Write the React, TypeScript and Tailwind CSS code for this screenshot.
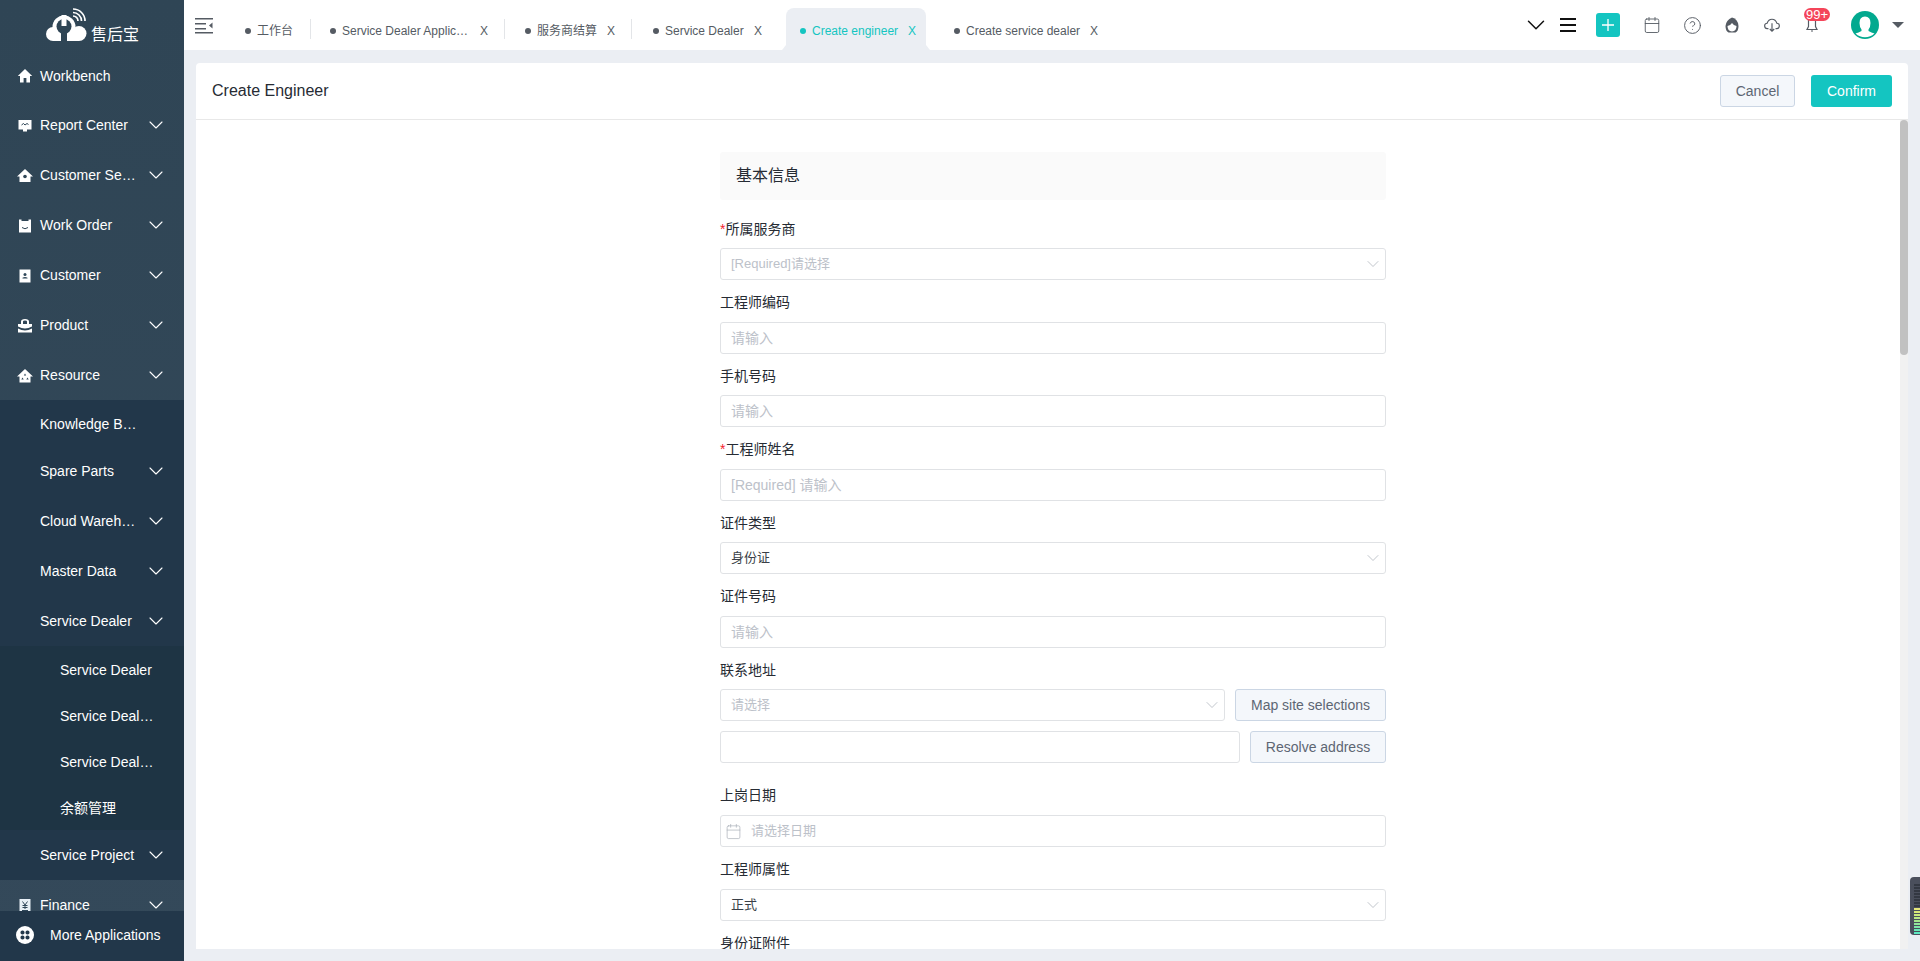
import React from 'react'
import { ChevronDown, Calendar, CircleHelp } from 'lucide-react'

const Ico = ({ children }: { children: React.ReactNode }) => (
  <svg viewBox="0 0 16 16" className="w-4 h-4 shrink-0" fill="#fff">
    {children}
  </svg>
)

const icons: Record<string, React.ReactNode> = {
  home: <Ico><path d="M8 1 .8 8h2.2v6.500h3.600V10h2.800v4.500h3.600V8h2.200z" /></Ico>,
  report: <Ico><path d="M1.500 2h13v9.500H10v2H6v-2H1.500z" /><path d="M4.500 7 6.500 5.500 8 7l2-1.500 1.500 1" fill="none" stroke="#2f4656" /></Ico>,
  service: <Ico><path d="M8 1 0 8.500h2.500V14h11V8.500H16z" /><circle cx="8" cy="8.500" r="1.800" fill="#2f4656" /></Ico>,
  order: <Ico><path d="M2 1.500h2.500v1.500h7V1.500H14v13H2z" /><path d="M5 9.500q3 2.500 6 0" fill="none" stroke="#2f4656" /></Ico>,
  customer: <Ico><path d="M2.500 1.500h11v13h-11z" /><circle cx="8" cy="6.500" r="1.500" fill="#31485a" /><path d="M5.500 10.500h5v-.8q-2.500-1.500-5 0z" fill="#31485a" /></Ico>,
  product: <Ico><path d="M4 6V3.500Q4 1 8 1t4 2.500V6h3v2.500q-7 4-14 0V6zM6 6h4V3.500Q10 2.500 8 2.500T6 3.500z" fillRule="evenodd" /><path d="M1 10.500q7 4 14 0v4H1z" /></Ico>,
  resource: <Ico><path d="M8 1 0 8.500h2.500V14.500h11V8.500H16z" /><path d="M8 5.500l1.200 2H6.800zM5.500 9.500l1.200 2H4.300zM10.500 9.500l1.200 2H9.300z" fill="#31485a" /></Ico>,
  finance: <Ico><path d="M2.500 1h11v14h-11z" fill="#e8f0f6" /><path d="M5.500 3.500 8 7l2.500-3.500M5.500 7.500h5M5.500 9.500h5M8 7v4M5 12.500h6" fill="none" stroke="#31485a" /></Ico>,
}

const Item = ({ label, icon, arrow = true, cls = 'h-[50px] pt-[1px]', long }: { label: string; icon?: string; arrow?: boolean; cls?: string; long?: boolean }) => (
  <div className={`${cls} flex items-center pl-[17px] relative text-white`}>
    <span className="w-[23px] shrink-0">{icon && icons[icon]}</span>
    <span className={long ? 'w-[97px] truncate' : ''}>{label}</span>
    {arrow && <ChevronDown size={24} strokeWidth={1.100} className="absolute left-[144px] top-1/2 -translate-y-1/2" />}
  </div>
)

const SubItem = ({ label, long }: { label: string; long?: boolean }) => (
  <div className="h-[46px] flex items-center pl-[60px] pt-[2px] text-white">
    <span className={long ? 'w-[94px] truncate' : ''}>{label}</span>
  </div>
)

const Sidebar = () => (
  <aside className="w-[184px] h-full shrink-0 relative overflow-hidden text-[14px] bg-gradient-to-b from-[#2f4555] to-[#34495a]">
    <div className="h-[51px] flex items-start pl-[46px] pt-[4px]">
      <svg viewBox="0 0 44 38" className="w-[44px] h-[38px] shrink-0">
        <g fill="#fff">
          <circle cx="7" cy="30" r="7" />
          <circle cx="18" cy="23" r="11.500" />
          <circle cx="33" cy="29.500" r="7.500" />
          <rect x="7" y="26" width="26" height="11" />
        </g>
        <circle cx="18" cy="22.500" r="7.500" fill="#2f4555" />
        <rect x="15.500" y="11" width="5" height="11" fill="#fff" />
        <rect x="15" y="27" width="6" height="11" fill="#2f4555" />
        <path d="M27 12a5 5 0 0 1 5 5M27 8.500A8.500 8.500 0 0 1 35.500 17M27 5a12 12 0 0 1 12 12" fill="none" stroke="#fff" strokeWidth="1.700" />
      </svg>
      <span className="text-white text-[16px] leading-5 ml-[1px] mt-[21px]">售后宝</span>
    </div>
    <Item label="Workbench" icon="home" arrow={false} cls="h-[49px] pt-[1px]" />
    <Item label="Report Center" icon="report" />
    <Item label="Customer Service" icon="service" long />
    <Item label="Work Order" icon="order" />
    <Item label="Customer" icon="customer" />
    <Item label="Product" icon="product" />
    <Item label="Resource" icon="resource" />
    <div className="bg-[#22374a]">
      <Item label="Knowledge Base Center" arrow={false} cls="h-[46px] pt-[2px]" long />
      <Item label="Spare Parts" />
      <Item label="Cloud Warehouse" long />
      <Item label="Master Data" />
      <Item label="Service Dealer" />
      <div className="bg-[#1e3444]">
        <SubItem label="Service Dealer" />
        <SubItem label="Service Dealer Application" long />
        <SubItem label="Service Dealer Settlement" long />
        <SubItem label="余额管理" />
      </div>
      <Item label="Service Project" />
    </div>
    <Item label="Finance" icon="finance" />
    <div className="absolute left-0 right-0 bottom-0 h-[50px] bg-[#22374a] flex items-center pl-[16px] pb-[2px] text-white">
      <svg viewBox="0 0 18 18" className="w-[18px] h-[18px] shrink-0">
        <circle cx="9" cy="9" r="9" fill="#fff" />
        <rect x="4.500" y="4.500" width="4" height="4" rx="1.800" fill="#22374a" />
        <rect x="9.500" y="4.500" width="4" height="4" rx="1.800" fill="#22374a" />
        <rect x="4.500" y="9.500" width="4" height="4" rx="1.800" fill="#22374a" />
        <rect x="9.500" y="9.500" width="4" height="4" rx="1.800" fill="#22374a" />
      </svg>
      <span className="ml-[16px]">More Applications</span>
    </div>
  </aside>
)

const Tab = ({ label, cls, active, sep, long, noClose }: { label: string; cls: string; active?: boolean; sep?: boolean; long?: boolean; noClose?: boolean }) => (
  <div className={`flex items-center relative shrink-0 ${cls} ${active ? 'h-[42px] pt-[3px] bg-[#ebeef3] rounded-t-[8px] text-[#14c5c1]' : 'h-[39px] text-[#555b63]'}`}>
    <span className={`w-[6px] h-[6px] rounded-full shrink-0 ${active ? 'bg-[#14c5c1]' : 'bg-[#555b63]'}`} />
    <span className={`ml-[6px] ${long ? 'w-[128px] truncate' : ''}`}>{label}</span>
    {!noClose && <span className="ml-auto">X</span>}
    {sep && <span className="absolute right-0 top-[8px] h-[20px] w-px bg-[#e3e5e8]" />}
    {active && (
      <>
        <span className="absolute left-[-4px] bottom-0 w-0 h-0 border-b-[5px] border-b-[#ebeef3] border-l-[4px] border-l-transparent" />
        <span className="absolute right-[-4px] bottom-0 w-0 h-0 border-b-[5px] border-b-[#ebeef3] border-r-[4px] border-r-transparent" />
      </>
    )}
  </div>
)

const Header = () => (
  <header className="h-[50px] bg-white flex items-end relative shrink-0">
    <svg viewBox="0 0 18 16" className="w-[18px] h-[16px] absolute left-[11px] top-[18px]" fill="#555b63">
      <rect x="0" y="0" width="18" height="1.500" />
      <rect x="0" y="5" width="11" height="1.500" />
      <rect x="0" y="10" width="11" height="1.500" />
      <rect x="0" y="14" width="18" height="1.500" />
      <path d="M17.500 4.500v6l-3.500-3z" />
    </svg>
    <div className="flex items-end text-[12px] ml-[46px]">
      <Tab label="工作台" cls="w-[81px] pl-[15px]" sep noClose />
      <Tab label="Service Dealer Application" cls="w-[194px] pl-[19px] pr-[17px]" sep long />
      <Tab label="服务商结算" cls="w-[127px] pl-[20px] pr-[17px]" sep />
      <Tab label="Service Dealer" cls="w-[154px] pl-[21px] pr-[24px]" />
      <Tab label="Create engineer" cls="w-[140px] pl-[14px] pr-[10px]" active />
      <Tab label="Create service dealer" cls="w-[189px] pl-[28px] pr-[17px]" />
    </div>
    <div className="absolute inset-y-0 right-0 flex items-center text-[#555b63]">
      <ChevronDown size={30} strokeWidth={1.200} className="text-[#111] mr-[9px]" />
      <span className="flex flex-col gap-[4px] w-[16px] mr-[20px]">
        <span className="h-[2px] bg-[#111]" />
        <span className="h-[2px] bg-[#111]" />
        <span className="h-[2px] bg-[#111]" />
      </span>
      <span className="w-[24px] h-[24px] rounded-[3px] bg-[#14c5c1] flex items-center justify-center mr-[23px]">
        <svg viewBox="0 0 12 12" className="w-[12px] h-[12px]"><path d="M6 0v12M0 6h12" stroke="#fff" strokeWidth="1.300" /></svg>
      </span>
      <Calendar size={18} strokeWidth={1.200} className="mr-[22px]" />
      <CircleHelp size={19} strokeWidth={1.200} className="mr-[22px]" />
      <svg viewBox="0 0 16 16" className="w-[16px] h-[16px] mr-[24px]">
        <path d="M8 .5q6 1.500 6.500 8.500 0 5-3 6.500h-7Q1.500 14 1.500 9 2 3 8 .5z" fill="#555b63" />
        <path d="M3.500 9q3-.5 4.500-3 1.500 2.500 4.500 3 0 5-4.500 5.500Q3.500 14 3.500 9z" fill="#fff" />
      </svg>
      <svg viewBox="0 0 18 16" className="w-[16px] h-[16px] mr-[26px]" fill="none" stroke="#555b63" strokeWidth="1.300">
        <path d="M5 12H4a3 3 0 0 1-.5-6Q5 1.500 9 1.500q4 0 5.500 4.500a3 3 0 0 1-.5 6h-1" />
        <path d="M9 6v9M6.500 12.500 9 15l2.500-2.500" />
      </svg>
      <span className="relative w-[12px] h-[14px] mr-[33px]">
        <svg viewBox="0 0 12 14" className="w-[12px] h-[14px]" fill="none" stroke="#555b63" strokeWidth="1.200">
          <path d="M2.500 1v7.500L1 11.500h10L9.500 8.500V1" />
          <path d="M5 13h2" />
        </svg>
        <span className="absolute left-[-2px] top-[-10px] h-[13px] w-[26px] rounded-full bg-[#f4455a] text-white text-[13px] leading-[13px] text-center">99+</span>
      </span>
      <svg viewBox="0 0 28 30" className="w-[28px] h-[30px] mr-[13px]">
        <circle cx="14" cy="15" r="14" fill="#02a98f" />
        <path d="M14 6.500q5.500 0 5.500 6.500 0 4-2 6.500v1.500q3 1.500 6 2.500A14 14 0 0 1 4.500 23.500q3-1 6-2.500v-1.500q-2-2.500-2-6.500 0-6.500 5.500-6.500z" fill="#fff" />
      </svg>
      <span className="w-0 h-0 border-x-[6px] border-x-transparent border-t-[6px] border-t-[#555b63] mr-[16px]" />
    </div>
  </header>
)

const inputCls =
  'h-8 w-full rounded-[3px] border border-[#e0e2e5] bg-white px-[10px] text-[14px] outline-none placeholder:text-[#bcc1c9]'

const Label = ({ text, req, cls = 'h-[41.500px] pt-[4px]' }: { text: string; req?: boolean; cls?: string }) => (
  <div className={`${cls} flex items-center text-[14px] text-[#262b33]`}>
    {req && <span className="text-[#f5222d]">*</span>}
    {text}
  </div>
)

const SelectBox = ({ value, placeholder }: { value?: string; placeholder?: string }) => (
  <div className="h-8 w-full rounded-[3px] border border-[#e0e2e5] bg-white pl-[10px] pr-2 text-[13px] flex items-center justify-between">
    <span className={value ? 'text-[#3a3f47]' : 'text-[#bcc1c9]'}>{value || placeholder}</span>
    <ChevronDown size={20} strokeWidth={1} className="text-[#b4bac2] mr-[-6px]" />
  </div>
)

const GhostBtn = ({ children, cls = '' }: { children: React.ReactNode; cls?: string }) => (
  <button className={`h-8 rounded-[3px] border border-[#cbd6e4] bg-[#f4f7fb] text-[14px] text-[#5d6673] ${cls}`}>{children}</button>
)

const Form = () => (
  <div className="w-[666px] mx-auto pt-[32px]">
    <div className="h-[48px] rounded-[3px] bg-[#fafafa] flex items-center pl-4 text-[16px] text-[#262b33]">基本信息</div>
    <Label text="所属服务商" req cls="h-[48px] pt-[10px]" />
    <SelectBox placeholder="[Required]请选择" />
    <Label text="工程师编码" />
    <input className={inputCls} placeholder="请输入" readOnly />
    <Label text="手机号码" />
    <input className={inputCls} placeholder="请输入" readOnly />
    <Label text="工程师姓名" req />
    <input className={inputCls} placeholder="[Required] 请输入" readOnly />
    <Label text="证件类型" />
    <SelectBox value="身份证" />
    <Label text="证件号码" />
    <input className={inputCls} placeholder="请输入" readOnly />
    <Label text="联系地址" />
    <div className="flex gap-[10px]">
      <div className="flex-1"><SelectBox placeholder="请选择" /></div>
      <GhostBtn cls="w-[151px]">Map site selections</GhostBtn>
    </div>
    <div className="flex gap-[10px] mt-[10px]">
      <input className={`${inputCls} flex-1`} readOnly />
      <GhostBtn cls="w-[136px] shrink-0">Resolve address</GhostBtn>
    </div>
    <Label text="上岗日期" cls="h-[52px] pt-[12px]" />
    <div className="h-8 rounded-[3px] border border-[#e0e2e5] flex items-center pl-[4px] text-[13px] text-[#bcc1c9]">
      <Calendar size={17} strokeWidth={1} className="text-[#aab0b8]" />
      <span className="ml-[9px]">请选择日期</span>
    </div>
    <Label text="工程师属性" />
    <SelectBox value="正式" />
    <Label text="身份证附件" />
  </div>
)

export default function App() {
  return (
    <div className="w-full h-screen flex overflow-hidden bg-[#ebeef3] font-['Liberation_Sans','Noto_Sans_CJK_SC',sans-serif]">
      <Sidebar />
      <div className="flex-1 flex flex-col min-w-0 relative">
        <Header />
        <main className="flex-1 min-h-0 pt-[13px] pl-[12px] pr-[12px] pb-[12px]">
          <section className="h-full rounded-t-[4px] bg-white flex flex-col overflow-hidden relative">
            <div className="h-[57px] shrink-0 border-b border-[#e8e8e8] flex items-center justify-between pl-[16px] pr-[16px]">
              <h1 className="text-[16px] text-[#262b33]">Create Engineer</h1>
              <div className="flex gap-4 text-[14px]">
                <GhostBtn cls="w-[75px]">Cancel</GhostBtn>
                <button className="h-8 w-[81px] rounded-[3px] bg-[#14c5c1] text-white">Confirm</button>
              </div>
            </div>
            <div className="flex-1 min-h-0 overflow-hidden pl-[2px]">
              <Form />
            </div>
            {/* scrollbar */}
            <div className="absolute right-0 top-[57px] bottom-0 w-[8px] bg-[#f1f1f1]">
              <div className="h-[235px] rounded-[4px] bg-[#c1c1c1]" />
            </div>
          </section>
        </main>
      </div>
      {/* floating meter widget */}
      <div className="absolute right-0 top-[877px] h-[58px] w-[10px] rounded-l-[4px] bg-[#4a4f5c] flex flex-col gap-[1px] pl-[4px] pt-[7px]">
        {['#333842', '#333842', '#333842', '#333842', '#333842', '#333842', '#333842', '#333842', '#e6e87a', '#d8e878', '#c8e87c', '#b8e884', '#a4e88c', '#90e89c', '#7ce8a8', '#68e8b4', '#5ce8c0'].map((c, i) => (
          <span key={i} className="h-[2px] w-[6px]" style={{ background: c }} />
        ))}
      </div>
    </div>
  )
}
